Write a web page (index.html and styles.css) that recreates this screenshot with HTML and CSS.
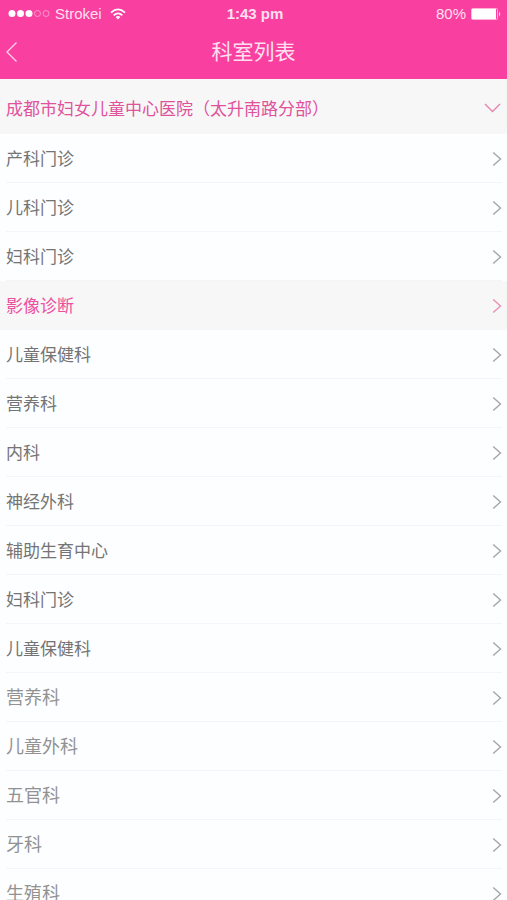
FILE: index.html
```html
<!DOCTYPE html>
<html lang="zh-CN">
<head>
    <meta charset="UTF-8">
    <meta name="viewport" content="width=device-width, initial-scale=1.0">
    <title>科室列表</title>
    <link rel="stylesheet" href="styles.css">
</head>
<body>

    <svg class="icons" aria-hidden="true">
        <symbol id="arrow" viewBox="0 0 10 16">
            <path d="M1.2 1.5 L8.5 8 L1.2 14.5" />
        </symbol>
    </svg>

    <header class="top">
        <div class="status">
            <div class="carrier">
                <svg width="42" height="10" viewBox="0 0 42 10">
                    <g fill="#fff">
                        <circle cx="4" cy="4.5" r="3.5" />
                        <circle cx="12.5" cy="4.5" r="3.5" />
                        <circle cx="21" cy="4.5" r="3.5" />
                    </g>
                    <g fill="none" stroke="#ff9fd0" stroke-width="0.9">
                        <circle cx="29.5" cy="4.5" r="3" />
                        <circle cx="38" cy="4.5" r="3" />
                    </g>
                </svg>
                <span>Strokei</span>
                <svg class="wifi" width="16" height="12" viewBox="0 0 16 12">
                    <g fill="none" stroke="#fff" stroke-width="1.8">
                        <path d="M1 4.6 Q8 -1.8 15 4.6" />
                        <path d="M3.7 7.4 Q8 3.4 12.3 7.4" />
                    </g>
                    <path d="M5.6 9 Q8 7 10.4 9 L8 11.6 Z" fill="#fff" />
                </svg>
            </div>
            <div class="time">1:43 pm</div>
            <div class="power">
                <span>80%</span>
                <svg width="31" height="14" viewBox="0 0 31 14">
                    <rect x="0.5" y="1.5" width="26" height="11" rx="1" fill="none" stroke="#ffb5da" />
                    <rect x="1" y="2" width="24" height="10" fill="#fff" />
                    <path d="M28 4.5 Q30.5 7 28 9.5 Z" fill="#ffd3e9" />
                </svg>
            </div>
        </div>
        <div class="title-bar">
            <button class="back" type="button" aria-label="返回">
                <svg width="12" height="20" viewBox="0 0 12 20">
                    <path d="M10.5 0.5 L1 10 L10.5 19.5" />
                </svg>
            </button>
            <h1>科室列表</h1>
        </div>
    </header>

    <main>
        <button class="hospital" type="button" aria-expanded="true">
            <span>成都市妇女儿童中心医院（太升南路分部）</span>
            <svg width="17" height="10" viewBox="0 0 17 10">
                <path d="M1 1 L8.5 8.5 L16 1" />
            </svg>
        </button>

        <ul class="list">
            <li><a href="#">产科门诊<svg class="arrow"><use href="#arrow" /></svg></a></li>
            <li><a href="#">儿科门诊<svg class="arrow"><use href="#arrow" /></svg></a></li>
            <li><a href="#">妇科门诊<svg class="arrow"><use href="#arrow" /></svg></a></li>
            <li class="active"><a href="#">影像诊断<svg class="arrow"><use href="#arrow" /></svg></a></li>
            <li><a href="#">儿童保健科<svg class="arrow"><use href="#arrow" /></svg></a></li>
            <li><a href="#">营养科<svg class="arrow"><use href="#arrow" /></svg></a></li>
            <li><a href="#">内科<svg class="arrow"><use href="#arrow" /></svg></a></li>
            <li><a href="#">神经外科<svg class="arrow"><use href="#arrow" /></svg></a></li>
            <li><a href="#">辅助生育中心<svg class="arrow"><use href="#arrow" /></svg></a></li>
            <li><a href="#">妇科门诊<svg class="arrow"><use href="#arrow" /></svg></a></li>
            <li><a href="#">儿童保健科<svg class="arrow"><use href="#arrow" /></svg></a></li>
            <li class="light"><a href="#">营养科<svg class="arrow"><use href="#arrow" /></svg></a></li>
            <li class="light"><a href="#">儿童外科<svg class="arrow"><use href="#arrow" /></svg></a></li>
            <li class="light"><a href="#">五官科<svg class="arrow"><use href="#arrow" /></svg></a></li>
            <li class="light"><a href="#">牙科<svg class="arrow"><use href="#arrow" /></svg></a></li>
            <li class="light"><a href="#">生殖科<svg class="arrow"><use href="#arrow" /></svg></a></li>
        </ul>
    </main>

</body>
</html>
```
FILE: styles.css
```css
* {
    box-sizing: border-box;
}

body {
    margin: 0;
    background-color: #fdfeff;
    color: #747474;
    font-family: "Liberation Sans", "Noto Sans CJK SC", sans-serif;
    font-size: 17px;
}

button {
    border: 0;
    background: none;
    font: inherit;
    color: inherit;
    cursor: pointer;
}

svg {
    display: block;
    flex: none;
}

.icons {
    width: 0;
    height: 0;
    position: absolute;
}

/* barra superior */
.top {
    background-color: #f93f9f;
    color: #ffe0f0;
}

.status {
    display: grid;
    grid-template-columns: 1fr auto 1fr;
    align-items: center;
    height: 27px;
    padding: 0 5px 0 8px;
    font-size: 15px;
}

.carrier,
.power {
    display: flex;
    align-items: center;
    gap: 5px;
}

.wifi {
    margin-left: 3px;
}

.time {
    font-weight: bold;
}

.power {
    justify-content: flex-end;
}

.title-bar {
    display: grid;
    grid-template-columns: 40px 1fr 40px;
    align-items: center;
    height: 52px;
    padding-bottom: 2px;
}

.back {
    padding: 10px 6px;
}

.back path {
    fill: none;
    stroke: #ffd3e9;
    stroke-width: 1.3;
}

.title-bar h1 {
    margin: 0;
    font-size: 21px;
    font-weight: normal;
    line-height: 30px;
    text-align: center;
}

.hospital {
    display: flex;
    justify-content: space-between;
    align-items: center;
    width: 100%;
    height: 55px;
    padding: 2px 6px 0;
    background-color: #f7f7f7;
    color: #e0529b;
    text-align: left;
}

.hospital path {
    fill: none;
    stroke: #e583ab;
    stroke-width: 1.3;
}

.list {
    margin: 0;
    padding: 0;
    list-style: none;
}

.list li {
    padding: 0 5px 0 6px;
}

.list a {
    display: flex;
    justify-content: space-between;
    align-items: center;
    height: 49px;
    padding-bottom: 2px;
    border-bottom: 1px solid #f3f5f8;
    color: inherit;
    text-decoration: none;
}

.arrow {
    width: 10px;
    height: 16px;
    margin-top: 3px;
    fill: none;
    stroke: #a5a5a8;
    stroke-width: 1.4;
}

.list .active {
    background-color: #f7f7f7;
    color: #ee4fa0;
}

.list .active a {
    border-color: transparent;
}

.active .arrow {
    stroke: #e88fb3;
}

.list .light {
    color: #929292;
    font-size: 18px;
}
```
